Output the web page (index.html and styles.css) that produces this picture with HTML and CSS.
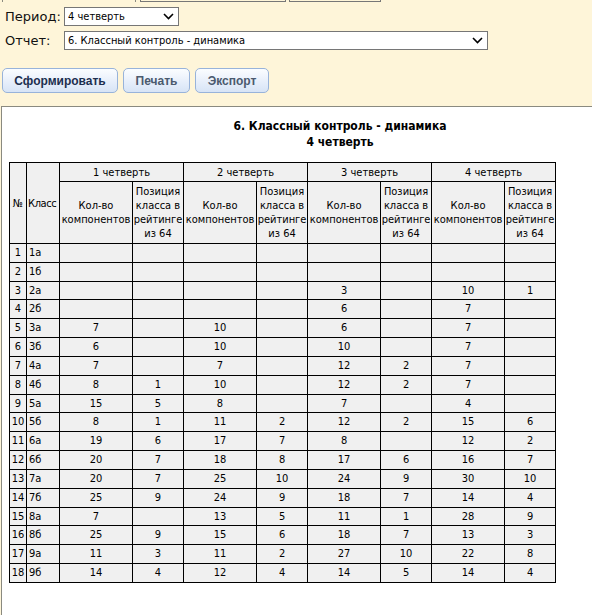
FILE: index.html
```html
<!DOCTYPE html>
<html lang="ru">
<head>
<meta charset="utf-8">
<link rel="stylesheet" href="styles.css">
</head>
<body>
<div class="strip">
  <span class="tick t1"></span>
  <span class="tick t2"></span>
  <span class="tab tab1"></span>
  <span class="tab tab2"></span>
</div>
<div class="form">
  <div class="row">
    <span class="lbl">Период:</span>
    <div class="sel sel-period"><span>4 четверть</span>
      <svg class="chev" width="11" height="7" viewBox="0 0 11 7"><path d="M1 1 L5.5 5.5 L10 1" fill="none" stroke="#000" stroke-width="1.6"/></svg>
    </div>
  </div>
  <div class="row">
    <span class="lbl">Отчет:</span>
    <div class="sel sel-report"><span>6. Классный контроль - динамика</span>
      <svg class="chev" width="11" height="7" viewBox="0 0 11 7"><path d="M1 1 L5.5 5.5 L10 1" fill="none" stroke="#000" stroke-width="1.6"/></svg>
    </div>
  </div>
</div>
<div class="buttons">
  <button class="btn btn-main">Сформировать</button>
  <button class="btn btn-dim btn-print">Печать</button>
  <button class="btn btn-dim btn-export">Экспорт</button>
</div>
<div class="panel">
  <div class="title">6. Классный контроль - динамика<br>4 четверть</div>
  <table class="grid">
    <colgroup>
      <col class="c-no"><col class="c-cls">
      <col class="c-k"><col class="c-p"><col class="c-k"><col class="c-p">
      <col class="c-k"><col class="c-p"><col class="c-k"><col class="c-p">
    </colgroup>
    <thead>
      <tr class="h1">
        <th rowspan="2" class="thno">№</th>
        <th rowspan="2" class="thcls">Класс</th>
        <th colspan="2">1 четверть</th>
        <th colspan="2">2 четверть</th>
        <th colspan="2">3 четверть</th>
        <th colspan="2">4 четверть</th>
      </tr>
      <tr class="h2">
        <th>Кол-во компонентов</th><th>Позиция класса в рейтинге из 64</th>
        <th>Кол-во компонентов</th><th>Позиция класса в рейтинге из 64</th>
        <th>Кол-во компонентов</th><th>Позиция класса в рейтинге из 64</th>
        <th>Кол-во компонентов</th><th>Позиция класса в рейтинге из 64</th>
      </tr>
    </thead>
    <tbody>
      <tr><td class="no">1</td><td class="cls">1а</td><td></td><td></td><td></td><td></td><td></td><td></td><td></td><td></td></tr>
      <tr><td class="no">2</td><td class="cls">1б</td><td></td><td></td><td></td><td></td><td></td><td></td><td></td><td></td></tr>
      <tr><td class="no">3</td><td class="cls">2а</td><td></td><td></td><td></td><td></td><td>3</td><td></td><td>10</td><td>1</td></tr>
      <tr><td class="no">4</td><td class="cls">2б</td><td></td><td></td><td></td><td></td><td>6</td><td></td><td>7</td><td></td></tr>
      <tr><td class="no">5</td><td class="cls">3а</td><td>7</td><td></td><td>10</td><td></td><td>6</td><td></td><td>7</td><td></td></tr>
      <tr><td class="no">6</td><td class="cls">3б</td><td>6</td><td></td><td>10</td><td></td><td>10</td><td></td><td>7</td><td></td></tr>
      <tr><td class="no">7</td><td class="cls">4а</td><td>7</td><td></td><td>7</td><td></td><td>12</td><td>2</td><td>7</td><td></td></tr>
      <tr><td class="no">8</td><td class="cls">4б</td><td>8</td><td>1</td><td>10</td><td></td><td>12</td><td>2</td><td>7</td><td></td></tr>
      <tr><td class="no">9</td><td class="cls">5а</td><td>15</td><td>5</td><td>8</td><td></td><td>7</td><td></td><td>4</td><td></td></tr>
      <tr><td class="no">10</td><td class="cls">5б</td><td>8</td><td>1</td><td>11</td><td>2</td><td>12</td><td>2</td><td>15</td><td>6</td></tr>
      <tr><td class="no">11</td><td class="cls">6а</td><td>19</td><td>6</td><td>17</td><td>7</td><td>8</td><td></td><td>12</td><td>2</td></tr>
      <tr><td class="no">12</td><td class="cls">6б</td><td>20</td><td>7</td><td>18</td><td>8</td><td>17</td><td>6</td><td>16</td><td>7</td></tr>
      <tr><td class="no">13</td><td class="cls">7а</td><td>20</td><td>7</td><td>25</td><td>10</td><td>24</td><td>9</td><td>30</td><td>10</td></tr>
      <tr><td class="no">14</td><td class="cls">7б</td><td>25</td><td>9</td><td>24</td><td>9</td><td>18</td><td>7</td><td>14</td><td>4</td></tr>
      <tr><td class="no">15</td><td class="cls">8а</td><td>7</td><td></td><td>13</td><td>5</td><td>11</td><td>1</td><td>28</td><td>9</td></tr>
      <tr><td class="no">16</td><td class="cls">8б</td><td>25</td><td>9</td><td>15</td><td>6</td><td>18</td><td>7</td><td>13</td><td>3</td></tr>
      <tr><td class="no">17</td><td class="cls">9а</td><td>11</td><td>3</td><td>11</td><td>2</td><td>27</td><td>10</td><td>22</td><td>8</td></tr>
      <tr><td class="no">18</td><td class="cls">9б</td><td>14</td><td>4</td><td>12</td><td>4</td><td>14</td><td>5</td><td>14</td><td>4</td></tr>
    </tbody>
  </table>
</div>
</body>
</html>
```

FILE: styles.css
```css
html, body {
  margin: 0;
  padding: 0;
  overflow: hidden;
  background: #fef5d9;
  font-family: "DejaVu Sans Condensed", "DejaVu Sans", sans-serif;
  color: #000;
}

.strip {
  display: flex;
  height: 3px;
  align-items: flex-start;
}
.tick {
  width: 1px;
  height: 2px;
  background: #8a8a80;
}
.t1 { margin-left: 2px; }
.t2 { margin-left: 132px; }
.tab {
  height: 1px;
  border: 1px solid #777;
  border-top: none;
}
.tab1 { margin-left: 4px; width: 144px; }
.tab2 { margin-left: 3px; width: 90px; }

.form {
  display: flex;
  flex-direction: column;
  gap: 5px;
  padding-top: 4px;
}
.row {
  display: flex;
  align-items: center;
  height: 19px;
}
.lbl {
  width: 64px;
  padding-left: 5px;
  box-sizing: border-box;
  font-family: "DejaVu Sans", sans-serif;
  font-size: 13px;
  color: #111;
}
.sel {
  box-sizing: border-box;
  height: 19px;
  background: #fff;
  border: 1px solid #767676;
  display: flex;
  align-items: center;
  justify-content: space-between;
  padding: 0 3px 0 3px;
  font-size: 11px;
}
.sel-period { width: 115px; }
.sel-report { width: 424px; }
.chev { margin-right: 1px; }

.buttons {
  display: flex;
  gap: 5px;
  margin-top: 18px;
  padding-left: 2px;
}
.btn {
  height: 25px;
  box-sizing: border-box;
  border: 1px solid #98b3da;
  border-radius: 5px;
  background: linear-gradient(#fbfdff, #e9f0fb 50%, #d7e4f6);
  font-family: "Liberation Sans", Arial, sans-serif;
  font-weight: bold;
  font-size: 12px;
  padding: 0;
}
.btn-main { width: 116px; color: #1c2f4f; }
.btn-print { width: 67px; color: #4b5a6e; }
.btn-export { width: 74px; color: #4b5a6e; }

.panel {
  margin-top: 13px;
  margin-left: 1px;
  width: 676px;
  height: 600px;
  background: #fff;
  border-top: 1px solid #8a8a80;
  border-left: 1px solid #8a8a80;
  padding-top: 11px;
}
.title {
  text-align: center;
  font-weight: bold;
  font-size: 12px;
  line-height: 16px;
}

.grid {
  margin-top: 12px;
  margin-left: 7px;
  border-collapse: collapse;
  table-layout: fixed;
  width: 546px;
  font-size: 11px;
}
.c-no { width: 17px; }
.c-cls { width: 33px; }
.c-k { width: 73px; }
.c-p { width: 51px; }

.grid th, .grid td {
  border: 1px solid #000;
  background: #f0f0f0;
  font-weight: normal;
  text-align: center;
  padding: 0 1px;
  overflow: hidden;
  white-space: nowrap;
}
.grid .h1 th {
  height: 18px;
  line-height: 17px;
}
.grid .h2 th {
  white-space: normal;
  line-height: 14px;
  height: 61px;
  vertical-align: middle;
  padding: 0;
}
.grid .thcls {
  text-align: left;
  padding-left: 1px;
  padding-right: 0;
  letter-spacing: -0.4px;
}
.grid td {
  line-height: 17.83px;
  height: 17.83px;
  padding-top: 0;
  padding-bottom: 0;
}
.grid td.cls { text-align: left; padding-left: 2px; }
```
